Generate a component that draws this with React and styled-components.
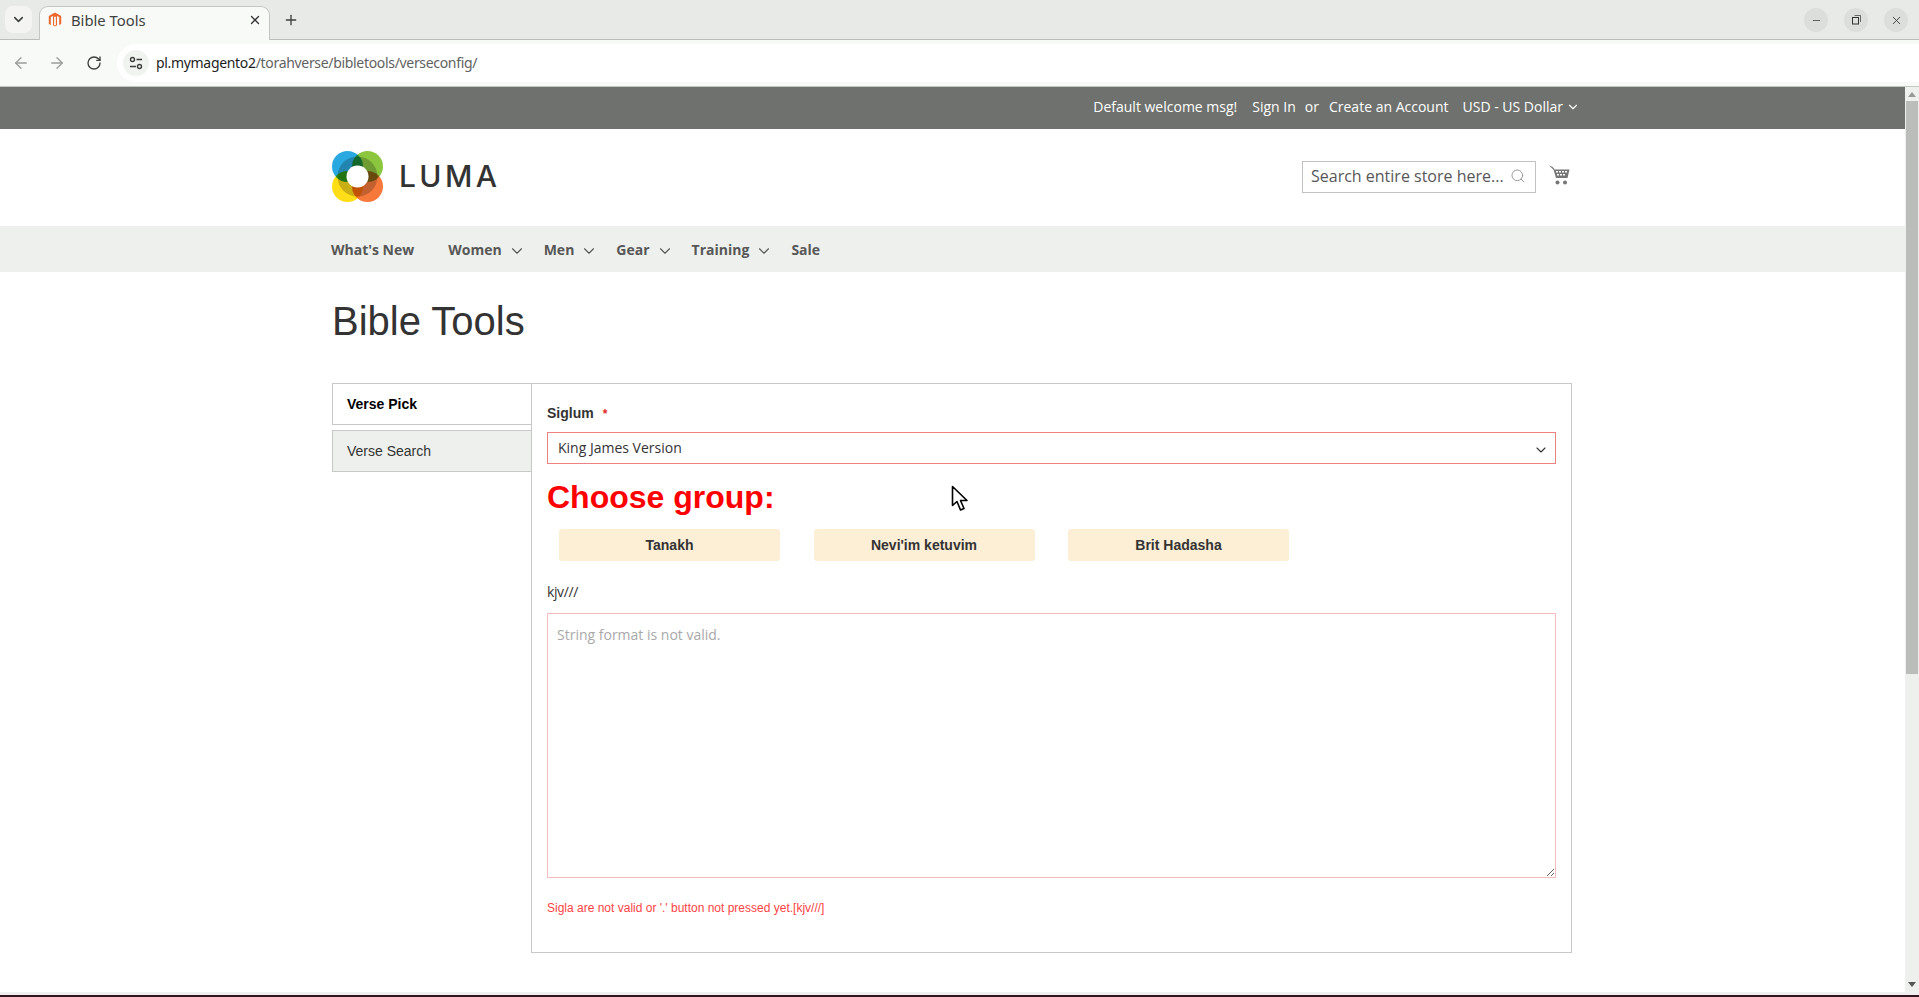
import styled, { createGlobalStyle } from "styled-components";
import { ArrowLeft, ArrowRight, ChevronDown, Minus, Plus, RotateCw, Search, X } from "lucide-react";

const GlobalStyle = createGlobalStyle`
  html, body {
    margin: 0;
    height: 100%;
    overflow: hidden;
    background: #fff;
  }
  * {
    box-sizing: border-box;
  }
`;

const Screen = styled.div`
  position: relative;
  display: flex;
  flex-direction: column;
  width: 1919px;
  height: 997px;
  overflow: hidden;
`;

/* browser frame */
const TabStrip = styled.div`
  flex: none;
  display: flex;
  align-items: flex-end;
  height: 40px;
  padding-left: 5px;
  background: #e8eae7;
  border-bottom: 1px solid #bcbebb;
  font-family: "Noto Sans", sans-serif;
`;

const TabList = styled.div`
  display: flex;
  align-items: center;
  justify-content: center;
  width: 27px;
  height: 27px;
  margin: 0 7px 6px 0;
  border-radius: 8px;
  background: #f4f5f3;
  color: #3c3f3c;
`;

const Tab = styled.div`
  display: flex;
  align-items: center;
  width: 231px;
  height: 34px;
  margin-bottom: -1px;
  padding: 0 7px 7px 8px;
  background: #f8faf7;
  border: 1px solid #c4c6c3;
  border-bottom: none;
  border-radius: 9px 9px 0 0;
  font-size: 14.8px;
  color: #3f423f;
`;

const TabTitle = styled.span`
  flex: 1;
  margin-left: 9px;
`;

const NewTab = styled.div`
  display: flex;
  margin: 0 0 11px 13px;
  color: #3c3f3c;
`;

const WindowButtons = styled.div`
  display: flex;
  gap: 16px;
  margin: 0 11px 7px auto;
`;

const WindowButton = styled.div`
  display: flex;
  align-items: center;
  justify-content: center;
  width: 24px;
  height: 24px;
  border-radius: 50%;
  background: #dcdedb;
  color: #333;
`;

const Toolbar = styled.div`
  flex: none;
  display: flex;
  align-items: center;
  height: 47px;
  padding-left: 12px;
  background: #f8faf7;
  border-bottom: 1px solid #c4c6c3;
`;

const NavButton = styled.div`
  display: flex;
  justify-content: ${(p) => (p.$active ? "flex-end" : "flex-start")};
  width: 18px;
  margin-right: 18px;
  color: ${(p) => (p.$active ? "#3c3f3c" : "#9a9d9a")};
`;

const AddressBar = styled.div`
  flex: 1;
  display: flex;
  align-items: center;
  height: 38px;
  margin-left: -3px;
  padding: 0 0 1px 6px;
  background: #fff;
  border-radius: 19px 0 0 19px;
  font-family: "Noto Sans", sans-serif;
  font-size: 14px;
  letter-spacing: -0.32px;
  color: #5f625f;
`;

const SiteInfo = styled.div`
  display: flex;
  align-items: center;
  justify-content: center;
  width: 26px;
  height: 26px;
  margin-right: 7px;
  border-radius: 50%;
  background: #f1f3f0;
`;

const Host = styled.span`
  color: #1c1e1c;
`;

/* store page */
const Viewport = styled.div`
  flex: 1;
  display: flex;
  min-height: 0;
`;

const Page = styled.div`
  flex: 1;
  min-width: 0;
  background: #fff;
  font-family: "Open Sans", sans-serif;
`;

const Scrollbar = styled.div`
  flex: none;
  display: flex;
  flex-direction: column;
  align-items: center;
  width: 14px;
  background: #eef0ed;
`;

const ScrollThumb = styled.div`
  width: 12px;
  height: 573px;
  margin-top: 4px;
  background: #babdb9;
`;

const ScrollArrow = styled.div`
  width: 0;
  height: 0;
  margin-top: ${(p) => (p.$down ? "auto" : "5px")};
  margin-bottom: ${(p) => (p.$down ? "5px" : "0")};
  border-left: 4px solid transparent;
  border-right: 4px solid transparent;
  border-top: ${(p) => (p.$down ? "5px solid #555" : "none")};
  border-bottom: ${(p) => (p.$down ? "none" : "5px solid #999")};
`;

const TopBar = styled.div`
  display: flex;
  align-items: center;
  justify-content: flex-end;
  height: 42px;
  padding: 0 325px 3px 0;
  background: #6e716d;
  font-size: 14px;
  color: #fff;
`;

const TopLink = styled.span`
  margin-left: ${(p) => p.$gap}px;
`;

const Currency = styled.span`
  display: flex;
  align-items: center;
  gap: 3px;
  margin-left: 14px;
`;

const Header = styled.header`
  display: flex;
  align-items: center;
  justify-content: space-between;
  width: 1241px;
  height: 97px;
  margin-left: 331px;
  padding-bottom: 2px;
`;

const Logo = styled.div`
  display: flex;
  align-items: center;
  gap: 15px;
  margin: 0 0 1px 1px;
`;

const LogoWord = styled.span`
  margin-left: 1px;
  font-family: "Inter", sans-serif;
  font-size: 30px;
  font-weight: 500;
  letter-spacing: 3.4px;
  line-height: 1;
  color: #333;
`;

const HeaderTools = styled.div`
  display: flex;
  align-items: flex-start;
  gap: 13px;
  margin: 0 2px 0 0;
`;

const SearchBox = styled.div`
  display: flex;
  align-items: center;
  width: 234px;
  height: 32px;
  padding: 0 9px 1px 8px;
  border: 1px solid #c2c2c2;
  font-size: 16px;
  color: #575757;
`;

const SearchText = styled.span`
  flex: 1;
  white-space: nowrap;
`;

const Cart = styled.svg`
  margin-top: 4px;
`;

const Nav = styled.nav`
  display: flex;
  align-items: center;
  height: 46px;
  padding-left: 331px;
  background: #eef0ed;
  font-size: 14px;
  font-weight: 700;
  color: #575757;
`;

const NavItem = styled.span`
  display: flex;
  align-items: center;
  gap: 6px;
  margin-right: ${(p) => (p.$menu ? 18 : 34)}px;
`;

const MenuChevron = styled(ChevronDown)`
  margin-top: 3px;
`;

const Content = styled.main`
  width: 1241px;
  margin-left: 331px;
  font-family: "Liberation Sans", sans-serif;
  font-size: 14px;
  color: #333;
`;

const Title = styled.h1`
  margin: 25px 0 0 1px;
  font-size: 40px;
  font-weight: 400;
  line-height: 48px;
  color: #333;
`;

const Columns = styled.div`
  display: flex;
  margin-top: 38px;
`;

const TabsColumn = styled.div`
  flex: none;
  display: flex;
  flex-direction: column;
  gap: 5px;
  width: 199px;
  margin-left: 1px;
`;

const SideTab = styled.div`
  display: flex;
  align-items: center;
  height: 42px;
  padding: 0 0 1px 14px;
  border: 1px solid #c8c8c8;
  border-right: none;
  background: ${(p) => (p.$active ? "#fff" : "#eef0ed")};
  font-weight: ${(p) => (p.$active ? 700 : 400)};
  color: ${(p) => (p.$active ? "#000" : "#333")};
`;

const Panel = styled.section`
  flex: 1;
  height: 570px;
  padding: 20px 15px 0;
  border: 1px solid #c8c8c8;
`;

const FieldLabel = styled.label`
  display: block;
  height: 19px;
  font-weight: 700;
  line-height: 18px;
`;

const Required = styled.span`
  margin-left: 9px;
  font-size: 12px;
  color: #e02b27;
`;

const SelectWrap = styled.div`
  position: relative;
  margin-top: 9px;
`;

const Select = styled.select`
  display: block;
  width: 100%;
  height: 32px;
  padding: 0 10px 2px;
  border: 1px solid #ed8380;
  border-radius: 0;
  appearance: none;
  background: #fff;
  font-family: "Open Sans", sans-serif;
  font-size: 14px;
  color: #333;
  outline: none;
`;

const SelectArrow = styled.span`
  position: absolute;
  top: 10px;
  right: 7px;
  display: flex;
  color: #333;
`;

const GroupHeading = styled.h2`
  margin: 15px 0 0;
  font-size: 32px;
  font-weight: 700;
  line-height: 36px;
  color: #f00;
`;

const GroupRow = styled.div`
  display: flex;
  gap: 33.500px;
  margin: 14px 0 0 12px;
`;

const GroupButton = styled.button`
  width: 221px;
  height: 32px;
  padding: 0;
  border: none;
  border-radius: 3px;
  background: #fdeed6;
  font-family: inherit;
  font-size: 14px;
  font-weight: 700;
  color: #333;
`;

const Sigla = styled.div`
  margin-top: 21px;
  height: 19px;
  font-family: "Open Sans", sans-serif;
  letter-spacing: -0.4px;
  line-height: 19px;
`;

const VerseInput = styled.textarea`
  display: block;
  width: 100%;
  height: 265px;
  margin-top: 12px;
  padding: 11px 9px 9px;
  border: 1px solid #f5bcbc;
  border-radius: 0;
  font-family: "Open Sans", sans-serif;
  font-size: 14px;
  line-height: 20px;
  outline: none;
  resize: vertical;
  &::placeholder {
    color: #a9a9a9;
    opacity: 1;
  }
`;

const ErrorText = styled.div`
  margin-top: 23px;
  font-size: 12px;
  line-height: 14px;
  color: #f44;
`;

const BottomEdge = styled.div`
  flex: none;
  height: 5px;
  background: #f0f0f0;
  border-bottom: 2px solid #33141f;
`;

const Pointer = styled.svg`
  position: absolute;
  top: 485px;
  left: 951px;
`;

function MagentoIcon() {
  return (
    <svg width="14" height="16" viewBox="0 0 14 16">
      <path
        d="M7 .5 13.2 4v8l-2 1.1V5.1L9 3.9v9.3l-2 1.3-2-1.3V3.9L2.800 5.1v8L.8 12V4zM6.100 5v8l.9.6.9-.6V5L7 4.500z"
        fill="#ee672f"
        fillRule="evenodd"
      />
    </svg>
  );
}

function TuneIcon() {
  return (
    <svg width="16" height="16" viewBox="0 0 16 16" fill="none" stroke="#3c3f3c" strokeWidth="1.4">
      <circle cx="4.500" cy="4.500" r="2" />
      <path d="M8.500 4.500H14M2 11.500h6" />
      <circle cx="11.500" cy="11.500" r="2" />
    </svg>
  );
}

function RestoreIcon() {
  return (
    <svg width="10" height="10" viewBox="0 0 10 10" fill="none" stroke="#333">
      <rect x="1.500" y="2.500" width="6" height="6.500" />
      <path d="M3.500 .5H9.500V7" strokeWidth=".7" />
    </svg>
  );
}

function LumaMark() {
  return (
    <svg width="51" height="51" viewBox="0 0 51 51" style={{ isolation: "isolate" }}>
      <circle cx="15.500" cy="15.500" r="15.500" fill="#2aa9e0" />
      <circle cx="35.500" cy="15.500" r="15.500" fill="#8cc63f" style={{ mixBlendMode: "multiply" }} />
      <circle cx="15.500" cy="35.500" r="15.500" fill="#ffde17" style={{ mixBlendMode: "multiply" }} />
      <circle cx="35.500" cy="35.500" r="15.500" fill="#f6793b" style={{ mixBlendMode: "multiply" }} />
      <circle cx="25.500" cy="25.500" r="20" fill="#c9c9c9" style={{ mixBlendMode: "multiply" }} />
      <circle cx="25.500" cy="25.500" r="11" fill="#fff" />
    </svg>
  );
}

function CartIcon() {
  return (
    <Cart width="21" height="20" viewBox="0 0 21 20">
      <path d="M0 .5 3.300 1.800 5.500 4 4.800 5z" fill="#757575" />
      <path
        d="M4.500 4.500H20.500L18.500 13H7zM7 6v1.500h2V6zm3 0v1.500h2V6zm3 0v1.500h2V6zm3 0v1.500h2V6zM8 9v1.500h2V9zm3 0v1.500h2V9zm3 0v1.500h2V9z"
        fill="#757575"
        fillRule="evenodd"
      />
      <circle cx="8.500" cy="17.500" r="2" fill="#757575" />
      <circle cx="16" cy="17.500" r="2" fill="#757575" />
    </Cart>
  );
}

export default function App() {
  return (
    <Screen>
      <GlobalStyle />
      {/* browser frame */}
      <TabStrip>
        <TabList>
          <ChevronDown size={15} strokeWidth={2.5} />
        </TabList>
        <Tab>
          <MagentoIcon />
          <TabTitle>Bible Tools</TabTitle>
          <X size={14} strokeWidth={2.2} color="#333" />
        </Tab>
        <NewTab>
          <Plus size={16} strokeWidth={2} />
        </NewTab>
        <WindowButtons>
          <WindowButton>
            <Minus size={11} strokeWidth={1.6} />
          </WindowButton>
          <WindowButton>
            <RestoreIcon />
          </WindowButton>
          <WindowButton>
            <X size={13} strokeWidth={1.6} />
          </WindowButton>
        </WindowButtons>
      </TabStrip>
      <Toolbar>
        <NavButton>
          <ArrowLeft size={18} strokeWidth={1.8} />
        </NavButton>
        <NavButton>
          <ArrowRight size={18} strokeWidth={1.8} />
        </NavButton>
        <NavButton $active>
          <RotateCw size={16} strokeWidth={2} />
        </NavButton>
        <AddressBar>
          <SiteInfo>
            <TuneIcon />
          </SiteInfo>
          <span>
            <Host>pl.mymagento2</Host>/torahverse/bibletools/verseconfig/
          </span>
        </AddressBar>
      </Toolbar>

      <Viewport>
        <Page>
          <TopBar>
            <TopLink>Default welcome msg!</TopLink>
            <TopLink $gap={15}>Sign In</TopLink>
            <TopLink $gap={9}>or</TopLink>
            <TopLink $gap={10}>Create an Account</TopLink>
            <Currency>
              USD - US Dollar
              <ChevronDown size={14} strokeWidth={2} />
            </Currency>
          </TopBar>
          <Header>
            <Logo>
              <LumaMark />
              <LogoWord>LUMA</LogoWord>
            </Logo>
            <HeaderTools>
              <SearchBox>
                <SearchText>Search entire store here...</SearchText>
                <Search size={16} strokeWidth={1.5} color="#9a9a9a" />
              </SearchBox>
              <CartIcon />
            </HeaderTools>
          </Header>
          <Nav>
            <NavItem>What's New</NavItem>
            <NavItem $menu>
              Women <MenuChevron size={18} strokeWidth={1.5} />
            </NavItem>
            <NavItem $menu>
              Men <MenuChevron size={18} strokeWidth={1.5} />
            </NavItem>
            <NavItem $menu>
              Gear <MenuChevron size={18} strokeWidth={1.5} />
            </NavItem>
            <NavItem $menu>
              Training <MenuChevron size={18} strokeWidth={1.5} />
            </NavItem>
            <NavItem>Sale</NavItem>
          </Nav>
          <Content>
            <Title>Bible Tools</Title>
            <Columns>
              <TabsColumn>
                <SideTab $active>Verse Pick</SideTab>
                <SideTab>Verse Search</SideTab>
              </TabsColumn>
              <Panel>
                <FieldLabel>
                  Siglum<Required>*</Required>
                </FieldLabel>
                <SelectWrap>
                  <Select defaultValue="kjv">
                    <option value="kjv">King James Version</option>
                  </Select>
                  <SelectArrow>
                    <ChevronDown size={16} strokeWidth={1.6} />
                  </SelectArrow>
                </SelectWrap>
                <GroupHeading>Choose group:</GroupHeading>
                <GroupRow>
                  <GroupButton>Tanakh</GroupButton>
                  <GroupButton>Nevi'im ketuvim</GroupButton>
                  <GroupButton>Brit Hadasha</GroupButton>
                </GroupRow>
                <Sigla>kjv///</Sigla>
                <VerseInput placeholder="String format is not valid." />
                <ErrorText>Sigla are not valid or '.' button not pressed yet.[kjv///]</ErrorText>
              </Panel>
            </Columns>
          </Content>
        </Page>
        <Scrollbar>
          <ScrollArrow />
          <ScrollThumb />
          <ScrollArrow $down />
        </Scrollbar>
      </Viewport>
      <BottomEdge />

      <Pointer width="20" height="28" viewBox="0 0 20 28">
        <path
          d="M1.500 1.500V20.500L6 16.500 9.500 25 13 23.500 9.500 15.500H16z"
          fill="#fff"
          stroke="#000"
          strokeWidth="1.600"
          strokeLinejoin="round"
        />
      </Pointer>
    </Screen>
  );
}
